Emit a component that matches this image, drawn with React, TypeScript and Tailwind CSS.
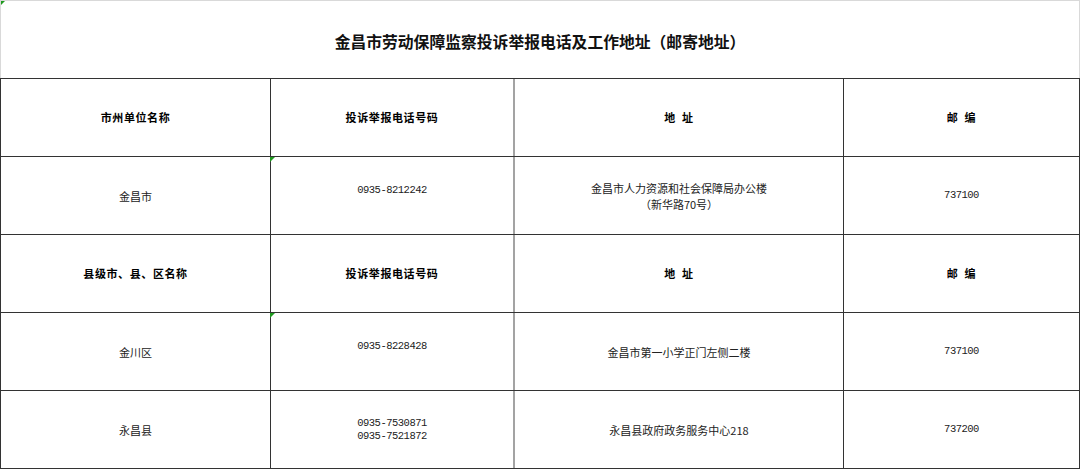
import React from "react";

const cjk = "font-['Noto_Sans_CJK_SC','Noto_Sans_CJK_TC',sans-serif]";
const mono = "font-['Liberation_Mono','Noto_Sans_CJK_SC',monospace]";

function Tri() {
  return (
    <svg className="absolute left-[-1px] top-0" width="5" height="5" viewBox="0 0 5 5">
      <polygon points="0,0 5,0 0,5" fill="#1f9a1f" />
    </svg>
  );
}

function Row({
  c1,
  c2,
  c3,
  c4,
  tri,
}: {
  c1: React.ReactNode;
  c2: React.ReactNode;
  c3: React.ReactNode;
  c4: React.ReactNode;
  tri?: boolean;
}) {
  return (
    <div className="flex h-[78px] border-b border-[#333]">
      <div className="w-[270px] border-r border-[#333] flex items-center justify-center">{c1}</div>
      <div className="relative w-[244px] border-r-2 border-[#a3a3a3] flex items-center justify-center">
        {tri && <Tri />}
        {c2}
      </div>
      <div className="w-[329px] border-r border-[#333] flex items-center justify-center">{c3}</div>
      <div className="w-[236px] border-r border-[#333] flex items-center justify-center">{c4}</div>
    </div>
  );
}

const H = ({ children }: { children: React.ReactNode }) => (
  <span className={`${cjk} text-[11px] font-bold tracking-[0.6px] text-black leading-none whitespace-pre`}>{children}</span>
);
const T = ({ children }: { children: React.ReactNode }) => (
  <span className={`${cjk} text-[11px] text-[#222] leading-[16px] text-center`}>{children}</span>
);
const N = ({ children, up }: { children: React.ReactNode; up?: boolean }) => (
  <span
    className={`${mono} text-[10.5px] tracking-[-0.5px] text-[#222] leading-[13px] text-center ${up ? "pb-[10px]" : ""}`}
  >
    {children}
  </span>
);

export default function App() {
  return (
    <div className="w-[1080px] h-[469px] bg-white overflow-hidden">
      <div className="relative h-[78px] border-t border-l border-r border-[#d9d9d9] flex items-center justify-center pt-[4px]">
        <svg className="absolute left-0 top-0" width="4" height="4" viewBox="0 0 4 4">
          <polygon points="0,0 4,0 0,4" fill="#1f9a1f" />
        </svg>
        <span className={`${cjk} text-[15.8px] font-bold text-[#111] leading-none`}>
          金昌市劳动保障监察投诉举报电话及工作地址（邮寄地址）
        </span>
      </div>
      <div className="border-t border-l border-[#333]">
        <Row c1={<H>市州单位名称</H>} c2={<H>投诉举报电话号码</H>} c3={<H>地  址</H>} c4={<H>邮  编</H>} />
        <Row
          tri
          c1={<T>金昌市</T>}
          c2={<N up>0935-8212242</N>}
          c3={
            <T>
              金昌市人力资源和社会保障局办公楼
              <br />
              （新华路70号）
            </T>
          }
          c4={<N>737100</N>}
        />
        <Row c1={<H>县级市、县、区名称</H>} c2={<H>投诉举报电话号码</H>} c3={<H>地  址</H>} c4={<H>邮  编</H>} />
        <Row
          tri
          c1={<T>金川区</T>}
          c2={<N up>0935-8228428</N>}
          c3={<T>金昌市第一小学正门左侧二楼</T>}
          c4={<N>737100</N>}
        />
        <Row
          c1={<T>永昌县</T>}
          c2={
            <N>
              0935-7530871
              <br />
              0935-7521872
            </N>
          }
          c3={<T>永昌县政府政务服务中心218</T>}
          c4={<N>737200</N>}
        />
      </div>
    </div>
  );
}
